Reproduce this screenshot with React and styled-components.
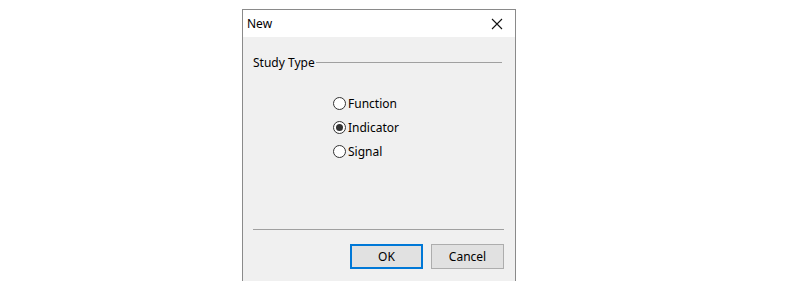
import React from "react";
import styled, { createGlobalStyle } from "styled-components";

const Global = createGlobalStyle`
  html, body { margin: 0; padding: 0; background: #ffffff; }
  body { font-family: "Noto Sans", "Open Sans", "Liberation Sans", sans-serif; font-size: 12px; color: #000; }
`;

const Page = styled.div`
  width: 800px;
  height: 298px;
  padding: 9px 0 0 242px;
  box-sizing: border-box;
`;

const Window = styled.div`
  width: 274px;
  height: 272px;
  box-sizing: border-box;
  border: 1px solid #8a8a8a;
  border-bottom: none;
  display: flex;
  flex-direction: column;
`;

const TitleBar = styled.div`
  height: 27px;
  background: #ffffff;
  display: flex;
  align-items: center;
  justify-content: space-between;
  padding: 0 12px 0 4px;
  flex: none;
`;

const Title = styled.span`
  font-size: 12px;
  color: #000;
`;

const Close = styled.svg`
  width: 12px;
  height: 12px;
`;

const Body = styled.div`
  flex: 1;
  background: #f0f0f0;
  display: flex;
  flex-direction: column;
  padding: 17px 11px 12px 10px;
`;

const GroupHeader = styled.div`
  display: flex;
  align-items: center;
  height: 16px;
  padding-right: 2px;
`;

const GroupLabel = styled.span`
  white-space: nowrap;
`;

const GroupLine = styled.div`
  flex: 1;
  height: 1px;
  background: #a0a0a0;
  margin-left: 1px;
`;

const RadioList = styled.div`
  display: flex;
  flex-direction: column;
  margin: 21px 0 0 80px;
`;

const RadioRow = styled.label`
  display: flex;
  align-items: center;
  height: 24px;
`;

const RadioCircle = styled.span`
  width: 13px;
  height: 13px;
  box-sizing: border-box;
  border: 1px solid #333333;
  border-radius: 50%;
  background: #ffffff;
  display: flex;
  align-items: center;
  justify-content: center;
  margin-right: 2px;
  &::after {
    content: "";
    width: 7px;
    height: 7px;
    border-radius: 50%;
    background: ${(p) => (p.$checked ? "#333333" : "transparent")};
  }
`;

const Spacer = styled.div`
  flex: 1;
`;

const Separator = styled.div`
  height: 1px;
  background: #a0a0a0;
  margin-right: 0;
`;

const ButtonRow = styled.div`
  display: flex;
  justify-content: flex-end;
  gap: 8px;
  margin-top: 14px;
`;

const Button = styled.button`
  width: 73px;
  height: 25px;
  box-sizing: border-box;
  background: #e1e1e1;
  border: ${(p) => (p.$default ? "2px solid #0078d7" : "1px solid #adadad")};
  font-family: inherit;
  font-size: 12px;
  color: #000;
  padding: 0;
  margin: 0;
`;

const options = [
  { label: "Function", checked: false },
  { label: "Indicator", checked: true },
  { label: "Signal", checked: false },
];

export default function App() {
  return (
    <Page>
      <Global />
      <Window>
        <TitleBar>
          <Title>New</Title>
          <Close viewBox="0 0 12 12">
            <path d="M1 1 L11 11 M11 1 L1 11" stroke="#111" strokeWidth="1.1" fill="none" />
          </Close>
        </TitleBar>
        <Body>
          <GroupHeader>
            <GroupLabel>Study Type</GroupLabel>
            <GroupLine />
          </GroupHeader>
          <RadioList>
            {options.map((o) => (
              <RadioRow key={o.label}>
                <RadioCircle $checked={o.checked} />
                {o.label}
              </RadioRow>
            ))}
          </RadioList>
          <Spacer />
          <Separator />
          <ButtonRow>
            <Button $default>OK</Button>
            <Button>Cancel</Button>
          </ButtonRow>
        </Body>
      </Window>
    </Page>
  );
}
